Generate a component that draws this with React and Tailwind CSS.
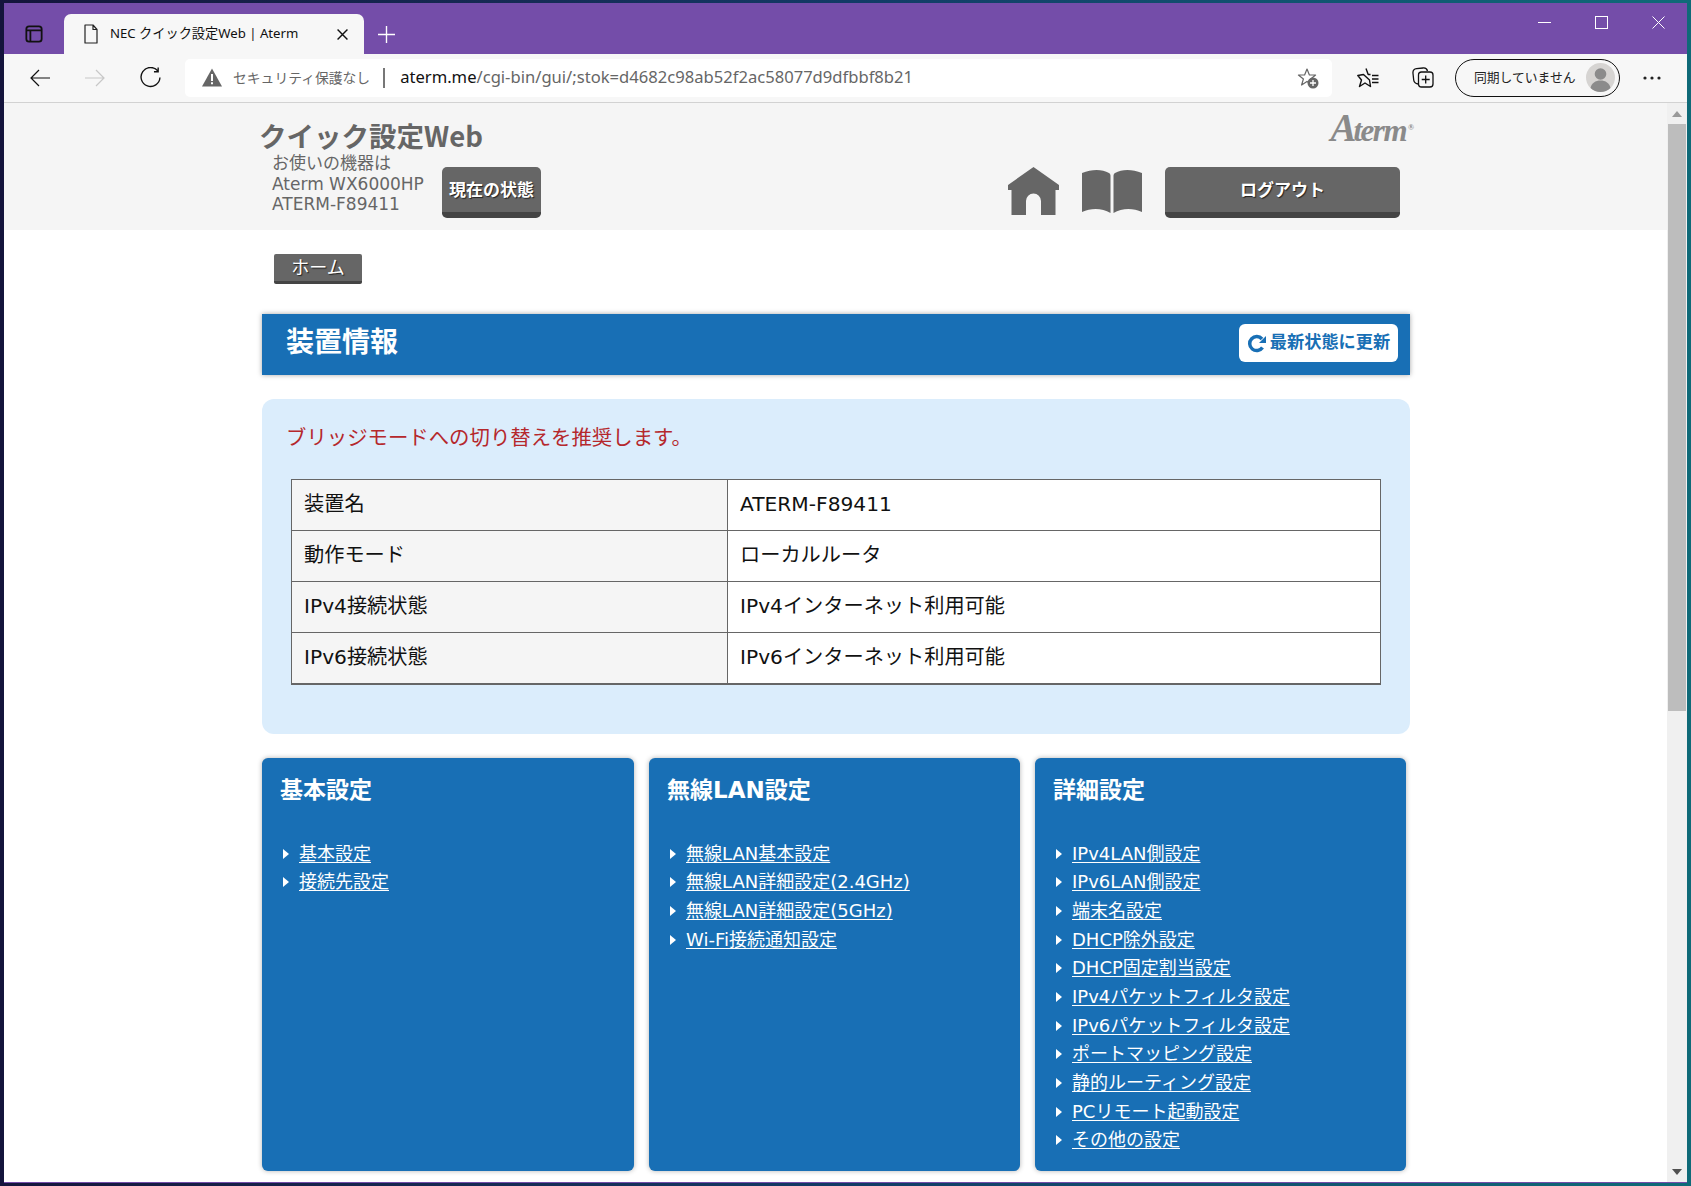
import React from 'react';

const jpFont = "font-['DejaVu_Sans','Noto_Sans_CJK_JP',sans-serif]";

const deviceRows = [
  ['装置名', 'ATERM-F89411'],
  ['動作モード', 'ローカルルータ'],
  ['IPv4接続状態', 'IPv4インターネット利用可能'],
  ['IPv6接続状態', 'IPv6インターネット利用可能'],
];

const menus = [
  { title: '基本設定', links: ['基本設定', '接続先設定'] },
  {
    title: '無線LAN設定',
    links: ['無線LAN基本設定', '無線LAN詳細設定(2.4GHz)', '無線LAN詳細設定(5GHz)', 'Wi-Fi接続通知設定'],
  },
  {
    title: '詳細設定',
    links: [
      'IPv4LAN側設定',
      'IPv6LAN側設定',
      '端末名設定',
      'DHCP除外設定',
      'DHCP固定割当設定',
      'IPv4パケットフィルタ設定',
      'IPv6パケットフィルタ設定',
      'ポートマッピング設定',
      '静的ルーティング設定',
      'PCリモート起動設定',
      'その他の設定',
    ],
  },
];

function Stroke({ className, children, viewBox = '0 0 20 20', width = 1.3 }) {
  return (
    <svg className={className} viewBox={viewBox} fill="none" stroke="currentColor" strokeWidth={width}>
      {children}
    </svg>
  );
}

function TabStrip() {
  return (
    <div className="h-[51px] shrink-0 bg-[#744da9] flex items-end relative">
      <div className="w-[60px] h-[40px] flex items-center justify-center">
        <Stroke className="w-[18px] h-[18px] text-[#111]" width={2}>
          <rect x="1.5" y="1.5" width="17" height="17" rx="3" />
          <path d="M1.5 6h17M6 6v12.500" />
        </Stroke>
      </div>
      <div className="w-[300px] h-[40px] bg-[#f7f7f7] rounded-t-[7px] flex items-center pl-[17px] pr-[16px]">
        <Stroke className="w-[20px] h-[20px] text-[#222] shrink-0" viewBox="0 0 16 20" width={1.2}>
          <path d="M2 1h8l4 4.5V19H2zM10 1v4.5h4" strokeLinejoin="round" />
        </Stroke>
        <span className="ml-[9px] flex-1 text-[13.200px] text-[#111] whitespace-nowrap font-['Noto_Sans','Noto_Sans_CJK_JP',sans-serif]">
          NEC クイック設定Web | Aterm
        </span>
        <Stroke className="w-[11px] h-[11px] text-[#111]" viewBox="0 0 10 10" width={1.3}>
          <path d="M0.5 0.5l9 9M9.5 0.5l-9 9" />
        </Stroke>
      </div>
      <div className="w-[44px] h-[40px] flex items-center justify-center">
        <Stroke className="w-[17px] h-[17px] text-white" viewBox="0 0 16 16" width={1.3}>
          <path d="M8 0v16M0 8h16" />
        </Stroke>
      </div>
      {/* window buttons */}
      <div className="absolute top-[13px] right-[22px] flex items-center gap-[44px] text-white">
        <Stroke className="w-[13px] h-[13px]" viewBox="0 0 13 13" width={1}>
          <path d="M0 6.5h13" />
        </Stroke>
        <Stroke className="w-[13px] h-[13px]" viewBox="0 0 13 13" width={1}>
          <rect x="0.5" y="0.5" width="12" height="12" />
        </Stroke>
        <Stroke className="w-[13px] h-[13px]" viewBox="0 0 13 13" width={1}>
          <path d="M0.5 0.5l12 12M12.5 0.5l-12 12" />
        </Stroke>
      </div>
    </div>
  );
}

function Toolbar() {
  return (
    <div className="h-[49px] shrink-0 bg-[#f7f7f7] border-b border-[#d2d2d2] flex items-center pb-[1px]">
      <div className="w-[181px] shrink-0 flex items-center pl-[26px] gap-[35px]">
        <Stroke className="w-[20px] h-[20px] text-[#111]" viewBox="0 0 20 20" width={1.2}>
          <path d="M20 10H1M9 2l-8 8 8 8" />
        </Stroke>
        <Stroke className="w-[20px] h-[20px] text-[#c8c8c8]" viewBox="0 0 20 20" width={1.2}>
          <path d="M0 10h19M11 2l8 8-8 8" />
        </Stroke>
        <Stroke className="w-[21px] h-[21px] text-[#111]" viewBox="0 0 20 20" width={1.3}>
          <path d="M17 3.8A9 9 0 1 0 19 10M17.3 0.5v4h-4" />
        </Stroke>
      </div>
      <div className="w-[1147px] h-[38px] bg-white rounded-[5px] flex items-center pl-[17px] pr-[13px] shrink-0">
        <svg className="w-[20px] h-[19px] shrink-0" viewBox="0 0 20 19">
          <path d="M10 0.5L20 18.5H0z" fill="#666" />
          <path d="M9 6h2v7H9zM9 14.2h2v2H9z" fill="#fff" />
        </svg>
        <span className="ml-[11px] text-[13.800px] text-[#666] whitespace-nowrap font-['Noto_Sans_CJK_JP',sans-serif]">
          セキュリティ保護なし
        </span>
        <span className="ml-[13px] w-[2px] h-[20px] bg-[#777]" />
        <span className="ml-[15px] flex-1 text-[16.600px] text-[#666] whitespace-nowrap font-['Noto_Sans',sans-serif]">
          <span className="text-[#111]">aterm.me</span>/cgi-bin/gui/;stok=d4682c98ab52f2ac58077d9dfbbf8b21
        </span>
        <svg className="w-[22px] h-[22px] shrink-0" viewBox="0 0 22 22">
          <path d="M10 2l2.400 6h6.200l-5 4 1.800 6-5.400-3.600L4.600 18l1.800-6-5-4h6.200z" fill="none" stroke="#666" strokeWidth="1.2" strokeLinejoin="round" />
          <circle cx="16" cy="16" r="5.5" fill="#666" />
          <path d="M16 13v6M13 16h6" stroke="#fff" strokeWidth="1.3" />
        </svg>
      </div>
      <div className="flex-1 flex items-center pl-[25px]">
        <svg className="w-[22px] h-[22px] shrink-0" viewBox="0 0 22 22" fill="none" stroke="#111" strokeWidth="1.4" strokeLinejoin="round">
          <path d="M9 1.500l2.200 6H13.500M12.500 13l1 6.500L8 16l-5.500 3.500 2-6.500L.8 8.500l5.700-1z" />
          <path d="M15 8.500h6.500M15 12h6.500M15 15.500h6.500" />
        </svg>
        <svg className="w-[22px] h-[22px] shrink-0 ml-[33px]" viewBox="0 0 22 22" fill="none" stroke="#111" strokeWidth="1.3">
          <path d="M6 17c-2.500-.5-4-1.800-4.300-4L1 6.500C.7 3.800 2 2 4.500 1.700L11 1c2.500-.3 4 .8 4.500 3" />
          <rect x="6.500" y="5" width="14.500" height="15" rx="3" />
          <path d="M13.700 8.500v8M9.700 12.500h8" />
        </svg>
        <div className="ml-[21px] w-[165px] h-[38px] rounded-full border-[1.5px] border-[#111] flex items-center pl-[18px] pr-[4px] justify-between">
          <span className="text-[12.800px] text-[#222] whitespace-nowrap pb-[2px] font-['Noto_Sans_CJK_JP',sans-serif]">同期していません</span>
          <svg className="w-[29px] h-[29px] shrink-0" viewBox="0 0 29 29">
            <circle cx="14.500" cy="14.500" r="14.500" fill="#d6d4d2" />
            <circle cx="14.500" cy="11" r="5.800" fill="#8b8b8b" />
            <path d="M4.500 25c1-5 5-7.500 10-7.500s9 2.500 10 7.500a14.500 14.500 0 0 1-20 0z" fill="#8b8b8b" />
          </svg>
        </div>
        <svg className="w-[18px] h-[4px] ml-[23px]" viewBox="0 0 18 4" fill="#222">
          <circle cx="2" cy="2" r="1.600" />
          <circle cx="9" cy="2" r="1.600" />
          <circle cx="16" cy="2" r="1.600" />
        </svg>
      </div>
    </div>
  );
}

function DarkButton({ className, children }) {
  return (
    <div
      className={`h-[51px] pt-[3px] bg-[#666] border-b-[6px] border-[#444] rounded-[5px] flex items-center justify-center text-white font-bold text-[17px] [text-shadow:1px_1px_1px_#222] ${className}`}
    >
      {children}
    </div>
  );
}

function SiteHeader() {
  return (
    <div className={`h-[127px] bg-[#f5f5f5] pl-[256px] pr-[267px] flex items-start justify-between ${jpFont}`}>
      <div className="pt-[14px]">
        <h1 className="-ml-[1px] text-[27.500px] leading-[36px] font-bold text-[#666] font-['Noto_Sans_CJK_JP',sans-serif]">クイック設定Web</h1>
        <div className="flex items-end">
          <div className="pl-[12px] w-[182px] text-[17px] leading-[20.500px] text-[#666] whitespace-nowrap">
            <p>お使いの機器は</p>
            <p>Aterm WX6000HP</p>
            <p>ATERM-F89411</p>
          </div>
          <DarkButton className="w-[99px] -mb-[3px]">現在の状態</DarkButton>
        </div>
      </div>
      <div className="flex flex-col items-end">
        <div className="h-[64px] pt-[5px] -mr-[14px] flex items-start text-[#8a8a8a] font-['Liberation_Serif',serif] italic font-bold">
          <span className="text-[39px] leading-[40px] tracking-[-3px]">A</span>
          <span className="text-[31px] leading-[46px] tracking-[-1.500px]">term</span>
          <span className="text-[8px] leading-[8px] mt-[16px] ml-[2px] not-italic">®</span>
        </div>
        <div className="flex items-start">
          <svg className="w-[51px] h-[48px] text-[#666]" viewBox="0 0 51 48" fill="currentColor">
            <path d="M25.500 0L51 18v5h-3.500v25H33V34a7.500 7.500 0 0 0-15 0v14H3.500V23H0v-5z" />
          </svg>
          <svg className="w-[60px] h-[44px] ml-[23px] mt-[2px] text-[#666]" viewBox="0 0 60 44" fill="currentColor">
            <path d="M0 4c10-4 20-4 27 0 1 .6 1.500 1.500 1.500 3v37C20 39 9 39 0 43z" />
            <path d="M60 4c-10-4-20-4-27 0-1 .6-1.500 1.500-1.500 3v37C40 39 51 39 60 43z" />
          </svg>
          <DarkButton className="w-[235px] ml-[23px]">ログアウト</DarkButton>
        </div>
      </div>
    </div>
  );
}

function StatusPanel() {
  return (
    <section className="mt-[24px] bg-[#dbedfc] rounded-[12px] h-[335px] pt-[24px]">
      <p className="pl-[24px] text-[20.400px] leading-[30px] text-[#b5282c]">ブリッジモードへの切り替えを推奨します。</p>
      <table className="mt-[26px] ml-[29px] w-[1090px] table-fixed border-collapse border-b-2 border-[#666] text-[20.200px] text-[#111]">
        <tbody>
          {deviceRows.map(([label, value]) => (
            <tr key={label} className="h-[51px]">
              <th className="w-[436px] border border-[#666] bg-[#f5f5f5] pl-[12px] pb-[2px] text-left font-normal">{label}</th>
              <td className="border border-[#666] bg-white pl-[12px] pb-[2px]">{value}</td>
            </tr>
          ))}
        </tbody>
      </table>
    </section>
  );
}

function MenuCard({ title, links }) {
  return (
    <div className="h-[413px] bg-[#186fb5] rounded-[6px] shadow-[0_0_5px_rgba(0,0,0,0.3)] pt-[15px] pl-[18px] text-white">
      <h2 className="text-[23px] leading-[34px] font-bold">{title}</h2>
      <ul className="mt-[32.500px]">
        {links.map((link) => (
          <li key={link} className="flex items-center h-[28.670px]">
            <span className="w-0 h-0 ml-[3px] border-y-[5px] border-y-transparent border-l-[6px] border-l-white" />
            <a href="#" className="ml-[10px] text-[18px] leading-[24px] underline underline-offset-[2px] whitespace-nowrap">
              {link}
            </a>
          </li>
        ))}
      </ul>
    </div>
  );
}

function Scrollbar() {
  return (
    <div className="w-[20px] shrink-0 bg-[#f0f0f0] flex flex-col items-center">
      <div className="h-[21px] flex items-center justify-center">
        <span className="w-0 h-0 border-x-[5px] border-x-transparent border-b-[6px] border-b-[#999]" />
      </div>
      <div className="w-[18px] h-[587px] bg-[#bdbdbd]" />
      <div className="flex-1" />
      <div className="h-[21px] flex items-center justify-center">
        <span className="w-0 h-0 border-x-[5px] border-x-transparent border-t-[6px] border-t-[#505050]" />
      </div>
    </div>
  );
}

export default function App() {
  return (
    <div className="w-[1691px] h-[1186px] overflow-hidden pt-[3px] px-[4px] pb-[3px] bg-gradient-to-r from-[#14143c] via-[#123a66] to-[#0f6a78]">
      <div className="h-full flex flex-col">
        <TabStrip />
        <Toolbar />
        <div className="flex-1 min-h-0 flex border-b border-[#744da9] bg-white">
          <div className="flex-1 min-w-0 overflow-hidden">
            <SiteHeader />
            <main className={`pl-[258px] pr-[257px] ${jpFont}`}>
              <div className="pt-[24px] pl-[12px]">
                <div className="w-[88px] h-[30px] bg-[#666] border-b-[3px] border-[#444] rounded-[2px] flex items-center justify-center text-white text-[18px] [text-shadow:1px_1px_1px_#222]">
                  ホーム
                </div>
              </div>
              <div className="mt-[30px] h-[61px] bg-[#186fb5] shadow-[0_0_5px_rgba(0,0,0,0.35)] flex items-center justify-between pl-[24px] pr-[12px] pb-[3px]">
                <h2 className="text-[28px] font-bold text-white">装置情報</h2>
                <div className="w-[159px] h-[38px] bg-white rounded-[6px] flex items-center justify-center gap-[3px] text-[#186fb5] text-[17.200px] font-bold">
                  <svg className="w-[20px] h-[20px] mt-[2px] shrink-0" viewBox="0 0 20 20" fill="none" stroke="currentColor" strokeWidth="3.500">
                    <path d="M15.500 13.500A7 7 0 1 1 15 5" />
                    <path d="M19 2v7h-7z" fill="currentColor" stroke="none" />
                  </svg>
                  最新状態に更新
                </div>
              </div>
              <StatusPanel />
              <div className="mt-[24px] grid grid-cols-[372px_371px_371px] gap-[15px]">
                {menus.map((menu) => (
                  <MenuCard key={menu.title} title={menu.title} links={menu.links} />
                ))}
              </div>
            </main>
          </div>
          <Scrollbar />
        </div>
      </div>
    </div>
  );
}
